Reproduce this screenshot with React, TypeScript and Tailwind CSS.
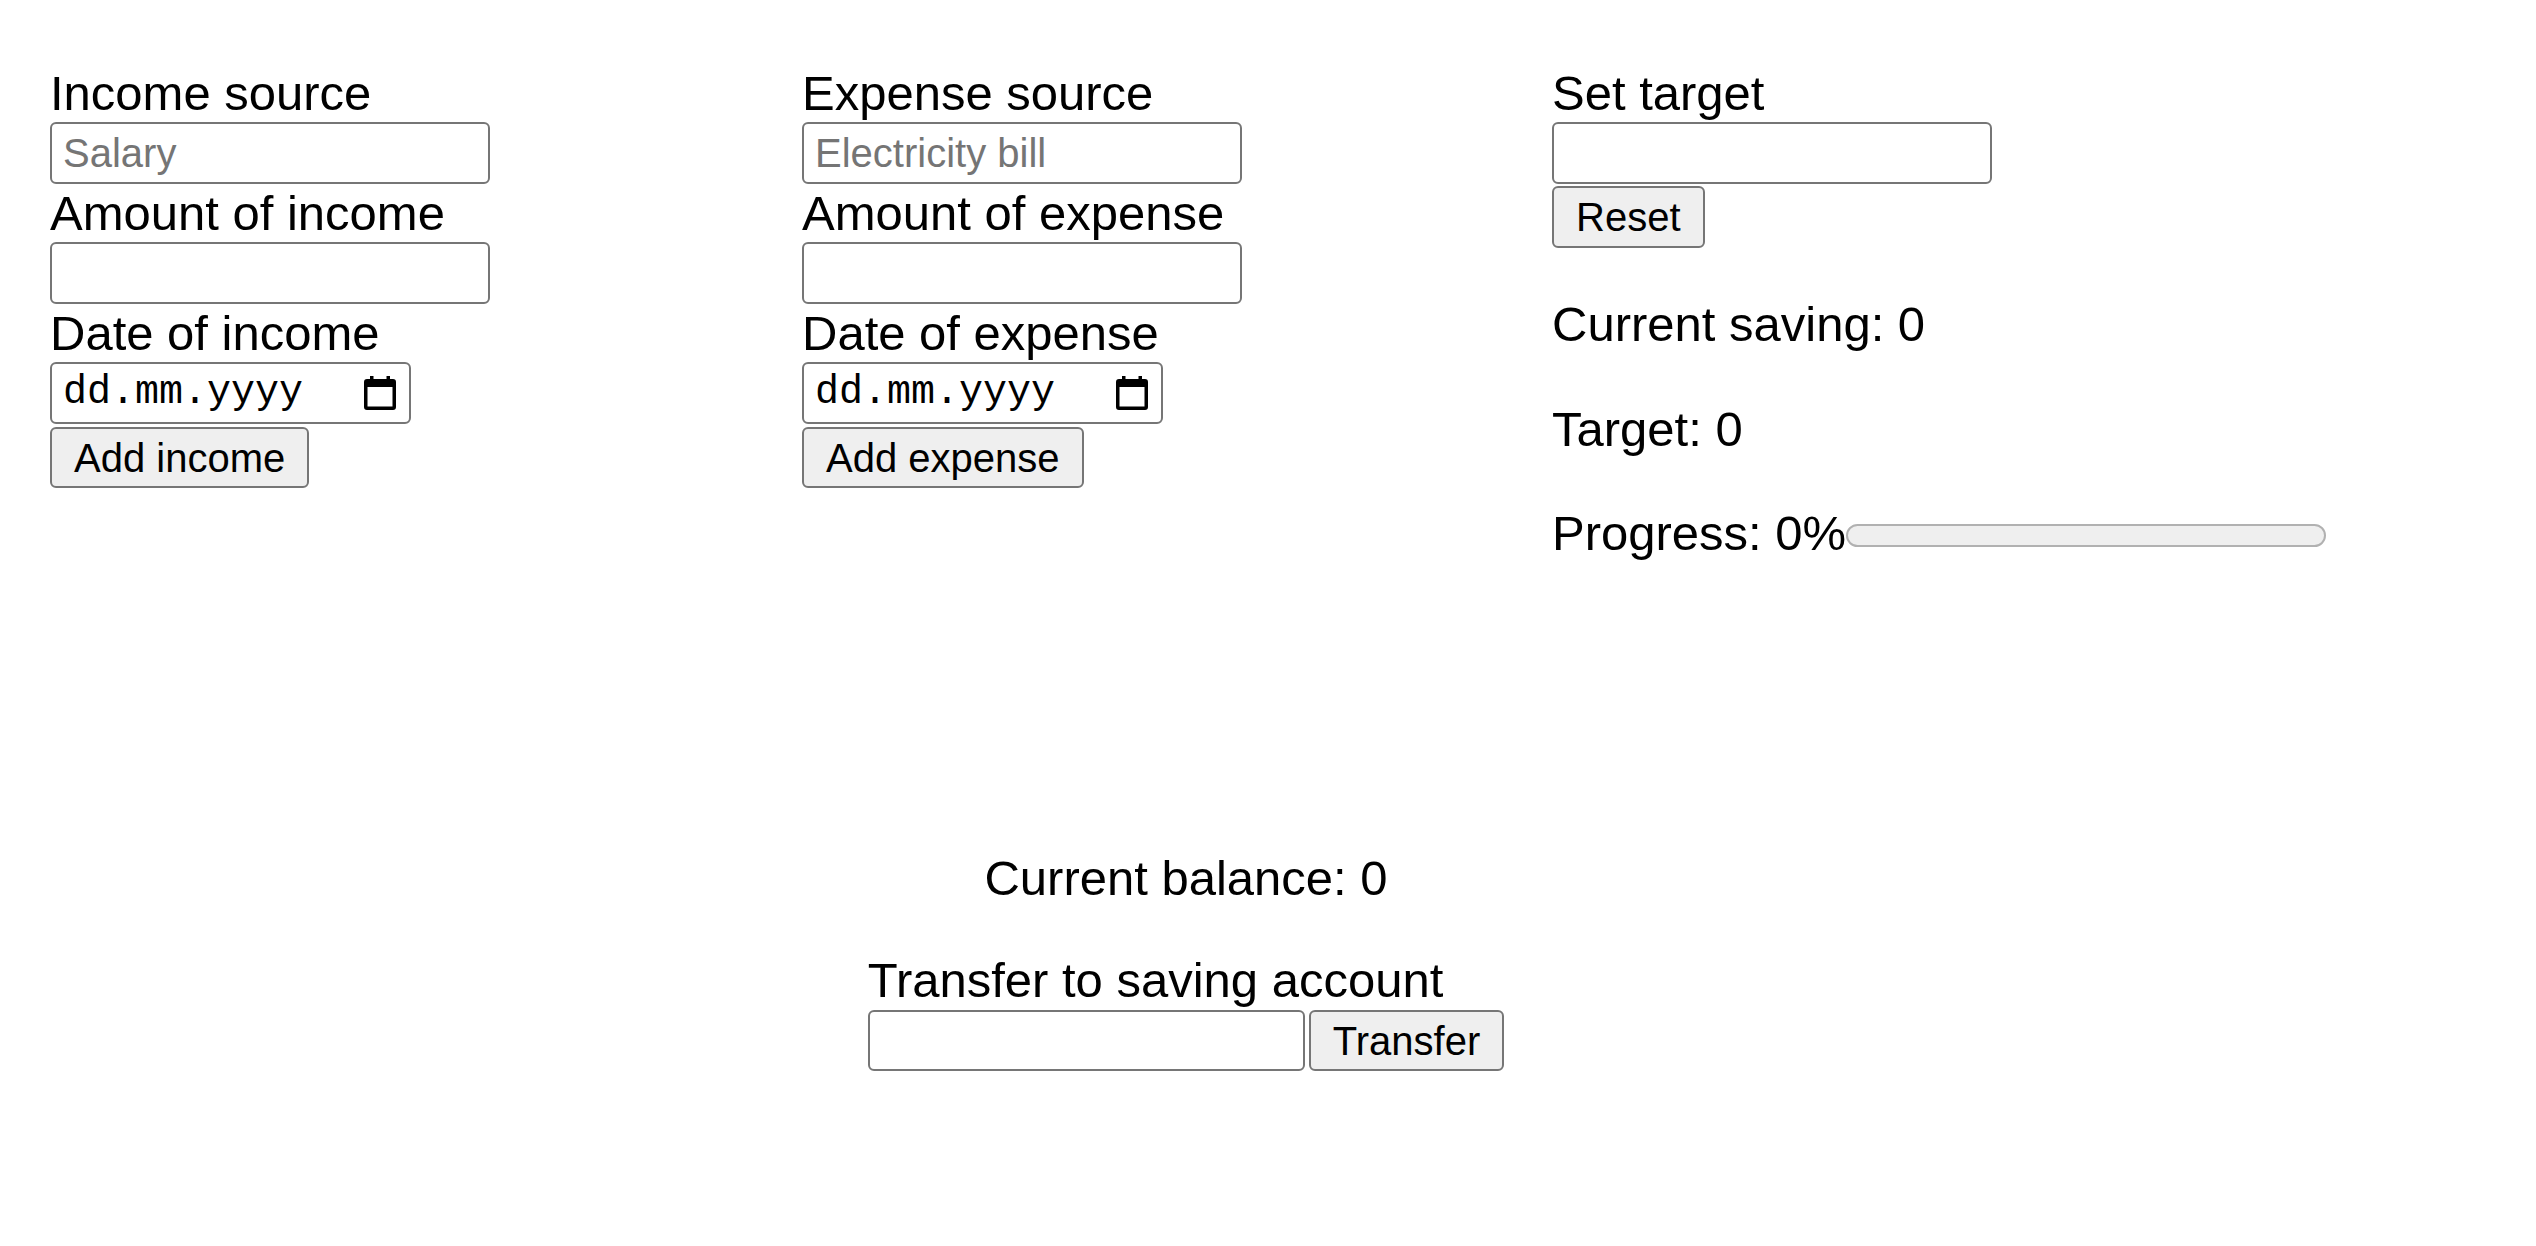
import React from "react";

function CalendarIcon() {
  return (
    <svg width="32" height="34" viewBox="0 0 32 34" className="shrink-0">
      <rect x="6" y="0" width="3.5" height="6" fill="#000" />
      <rect x="22.5" y="0" width="3.5" height="6" fill="#000" />
      <path
        fillRule="evenodd"
        fill="#000"
        d="M3 3h26a3 3 0 0 1 3 3v25a3 3 0 0 1-3 3H3a3 3 0 0 1-3-3V6a3 3 0 0 1 3-3zM3.5 11v19.5h25V11z"
      />
    </svg>
  );
}

function TextInput({ placeholder, w = "w-[440px]" }: { placeholder?: string; w?: string }) {
  return (
    <input
      type="text"
      placeholder={placeholder}
      className={`${w} h-[62px] box-border border-[2.5px] border-[#767676] rounded-[6px] bg-white px-[11px] text-[40px] text-black placeholder:text-[#757575] font-['Liberation_Sans',Arial,sans-serif] outline-none`}
    />
  );
}

function DateInput() {
  return (
    <div className="w-[361px] h-[62px] box-border border-[2.5px] border-[#767676] rounded-[6px] bg-white flex items-center pl-[11px] pr-[13px]">
      <span className="font-['Liberation_Mono','Courier_New',monospace] text-[40px] leading-[46px] text-black">dd.mm.yyyy</span>
      <div className="flex-1" />
      <CalendarIcon />
    </div>
  );
}

function Btn({ children, className = "" }: { children: React.ReactNode; className?: string }) {
  return (
    <button
      type="button"
      className={`h-[61px] box-border border-[2.5px] border-[#767676] rounded-[6px] bg-[#efefef] px-[22px] text-[40px] leading-[46px] text-black font-['Liberation_Sans',Arial,sans-serif] ${className}`}
    >
      {children}
    </button>
  );
}

function Label({ children }: { children: React.ReactNode }) {
  return <div className="leading-[58px] whitespace-nowrap">{children}</div>;
}

export default function App() {
  return (
    <div className="min-h-[1246px] bg-white text-black font-['Liberation_Sans',Arial,sans-serif] text-[49px] leading-[57px] pt-[64px] pl-[50px]">
      <div className="flex items-start">
        <div className="w-[752px] flex flex-col items-start">
          <Label>Income source</Label>
          <TextInput placeholder="Salary" />
          <Label>Amount of income</Label>
          <TextInput />
          <Label>Date of income</Label>
          <DateInput />
          <Btn className="mt-[3px]">Add income</Btn>
        </div>
        <div className="w-[750px] flex flex-col items-start">
          <Label>Expense source</Label>
          <TextInput placeholder="Electricity bill" />
          <Label>Amount of expense</Label>
          <TextInput />
          <Label>Date of expense</Label>
          <DateInput />
          <Btn className="mt-[3px]">Add expense</Btn>
        </div>
        <div className="flex flex-col items-start">
          <Label>Set target</Label>
          <TextInput />
          <Btn className="mt-[2px] h-[62px]">Reset</Btn>
          <p className="mt-[48px] leading-[57px]">Current saving: 0</p>
          <p className="mt-[48px] leading-[57px]">Target: 0</p>
          <div className="mt-[47px] flex items-start leading-[57px]">
            <span className="whitespace-nowrap">Progress: 0%</span>
            <div className="mt-[19px] w-[480px] h-[23px] box-border rounded-full border-[2.5px] border-[#b1b1b1] bg-[#efefef]" />
          </div>
        </div>
      </div>
      <div className="w-[2272px] mt-[288px] flex flex-col items-center">
        <p className="leading-[57px]">Current balance: 0</p>
        <div className="mt-[44px] flex flex-col items-start">
          <Label>Transfer to saving account</Label>
          <div className="mt-[1px] flex items-start gap-[4px]">
            <input
              type="text"
              className="w-[437px] h-[61px] box-border border-[2.5px] border-[#767676] rounded-[6px] bg-white px-[11px] text-[40px] outline-none font-['Liberation_Sans',Arial,sans-serif]"
            />
            <Btn>Transfer</Btn>
          </div>
        </div>
      </div>
    </div>
  );
}
